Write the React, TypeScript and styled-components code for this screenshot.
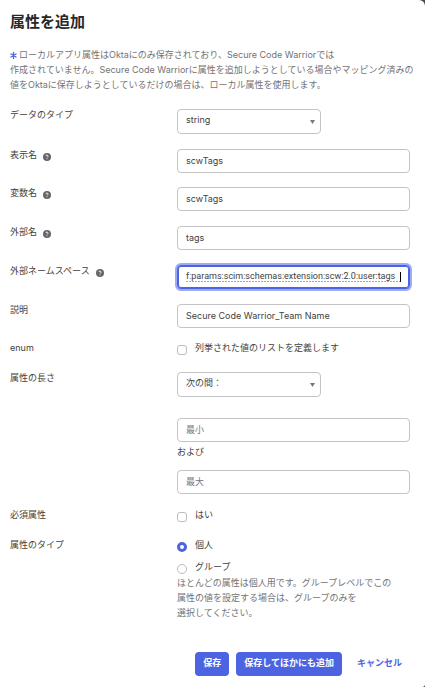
import React, { useId } from "react";
import styled, { createGlobalStyle, css } from "styled-components";

const GlobalStyle = createGlobalStyle`
  *, *::before, *::after { box-sizing: border-box; }
  body {
    margin: 0;
    background: #4a4a4a;
    color: #3f3f41;
    font: 9px/12px Inter, "Noto Sans CJK JP", sans-serif;
  }
  input, select, button { font: inherit; color: inherit; margin: 0; }
`;

const Dialog = styled.form`
  min-height: 100vh;
  padding: 11px 15px 11px 10px;
  background: #fff;
  border-radius: 0 6px 3px 0;
`;

const Title = styled.h1`
  margin: 0;
  font-size: 15px;
  line-height: 22px;
  font-weight: 700;
  color: #272727;
`;

const Intro = styled.p`
  margin: 14px 0 0;
  line-height: 15px;
  color: #737375;
  white-space: nowrap;
`;

const Star = styled.svg`
  width: 7px;
  height: 7px;
  margin-right: 2px;
  vertical-align: -1px;
`;

const Row = styled.div<{ $gap?: number }>`
  display: grid;
  grid-template-columns: 167px minmax(0, 1fr);
  align-items: start;
  margin-top: ${(p) => p.$gap ?? 15}px;
`;

const LabelCell = styled.div`
  display: flex;
  align-items: flex-start;
  gap: 6px;
`;

const Help = styled.button`
  display: flex;
  margin-top: 4px;
  padding: 0;
  border: 0;
  background: none;
  border-radius: 50%;
`;

const control = css`
  display: block;
  width: 100%;
  height: 24px;
  padding: 0 8px 2px;
  border: 1px solid #c4c4c6;
  border-radius: 4px;
  background: #fff;
  outline: none;
`;

const TextInput = styled.input`
  ${control}
  &::placeholder { color: #75757c; opacity: 1; }
`;

const FocusedInput = styled(TextInput)`
  border-color: #4c64e1;
  box-shadow: 0 0 0 2px #9eabf7, inset 0 0 0 1px #4c64e1;
  font-family: Roboto, sans-serif;
  background: repeating-linear-gradient(90deg, #ec8a96 0 2px, #fff 2px 3px) 0 15px / 100% 1px no-repeat content-box #fff;
`;

const CaretBox = styled.div`
  position: relative;
`;

const Caret = styled.span`
  position: absolute;
  top: 7px;
  right: 9px;
  width: 1px;
  height: 10px;
  background: #000;
`;

const SelectBox = styled.div`
  display: grid;
  width: 144px;
  align-items: center;
`;

const Select = styled.select`
  ${control}
  grid-area: 1 / 1;
  height: 25px;
  padding-bottom: 3px;
  appearance: none;
`;

const Arrow = styled.svg`
  grid-area: 1 / 1;
  justify-self: end;
  width: 5px;
  height: 4px;
  margin-right: 6px;
  pointer-events: none;
`;

const Option = styled.label<{ $gap?: number }>`
  display: flex;
  gap: 8px;
  height: 14px;
  margin-top: ${(p) => p.$gap ?? 0}px;
`;

const Tick = styled.input`
  appearance: none;
  width: 10px;
  height: 10px;
  margin-top: 3px;
  border: 1px solid #bcbcc0;
  border-radius: ${(p) => (p.type === "radio" ? "50%" : "3px")};
  background: #fff;
  &:checked { border: 3px solid #4c64e1; }
`;

const Between = styled.p`
  margin: 4px 0 12px;
`;

const Hint = styled.p`
  margin: 0;
  line-height: 15px;
  color: #737375;
`;

const Footer = styled.footer`
  display: flex;
  justify-content: flex-end;
  gap: 7px;
  margin-top: 32px;
`;

const Button = styled.button<{ $plain?: boolean }>`
  height: 24px;
  padding: 0 8px 2px;
  border: 0;
  border-radius: 4px;
  font-weight: 700;
  white-space: nowrap;
  color: ${(p) => (p.$plain ? "#4c64e1" : "#fff")};
  background: ${(p) => (p.$plain ? "none" : "#4c64e1")};
`;

function HelpIcon({ name }: { name: string }) {
  return (
    <Help type="button" aria-label={`${name}のヘルプ`}>
      <svg width="8" height="8" viewBox="0 0 16 16" aria-hidden="true">
        <circle cx="8" cy="8" r="8" fill="#66666a" />
        <path d="M6 6a2 2 0 1 1 2.9 1.9c-.6.3-.9.6-.9 1.3" fill="none" stroke="#fff" strokeWidth="1.7" />
        <circle cx="8" cy="11.7" r="1" fill="#fff" />
      </svg>
    </Help>
  );
}

interface FieldProps {
  label: string;
  value?: string;
  help?: boolean;
  focused?: boolean;
  gap?: number;
}

function TextField({ label, value, help, focused, gap }: FieldProps) {
  const id = useId();
  return (
    <Row $gap={gap}>
      <LabelCell>
        <label htmlFor={id}>{label}</label>
        {help && <HelpIcon name={label} />}
      </LabelCell>
      {focused ? (
        <CaretBox>
          <FocusedInput id={id} defaultValue={value} spellCheck={false} />
          <Caret />
        </CaretBox>
      ) : (
        <TextInput id={id} defaultValue={value} spellCheck={false} />
      )}
    </Row>
  );
}

function SelectField({ label, value, gap }: FieldProps) {
  const id = useId();
  return (
    <Row $gap={gap}>
      <label htmlFor={id}>{label}</label>
      <SelectBox>
        <Select id={id} defaultValue={value}>
          <option>{value}</option>
        </Select>
        <Arrow viewBox="0 0 5 4" aria-hidden="true">
          <path d="M0 0h5L2.5 4z" fill="#77777d" />
        </Arrow>
      </SelectBox>
    </Row>
  );
}

export default function App() {
  return (
    <>
      <GlobalStyle />
      <Dialog lang="ja" onSubmit={(e) => e.preventDefault()}>
        <Title>属性を追加</Title>
        <Intro>
          <Star viewBox="0 0 14 14" aria-hidden="true">
            <path d="M7 0v14M1 3.5l12 7M13 3.5l-12 7" stroke="#4c64e1" strokeWidth="2.6" />
          </Star>
          ローカルアプリ属性はOktaにのみ保存されており、Secure Code Warriorでは
          <br />
          作成されていません。Secure Code Warriorに属性を追加しようとしている場合やマッピング済みの
          <br />
          値をOktaに保存しようとしているだけの場合は、ローカル属性を使用します。
        </Intro>

        <SelectField label="データのタイプ" value="string" gap={17} />
        <TextField label="表示名" value="scwTags" help />
        <TextField label="変数名" value="scwTags" help gap={14} />
        <TextField label="外部名" value="tags" help />
        <TextField
          label="外部ネームスペース"
          value="f:params:scim:schemas:extension:scw:2.0:user:tags"
          help
          focused
        />
        <TextField label="説明" value="Secure Code Warrior_Team Name" />

        <Row $gap={14}>
          <span>enum</span>
          <Option>
            <Tick type="checkbox" />
            列挙された値のリストを定義します
          </Option>
        </Row>
        <SelectField label="属性の長さ" value="次の間：" gap={16} />
        <Row $gap={21}>
          <span />
          <div>
            <TextInput placeholder="最小" aria-label="最小" />
            <Between>および</Between>
            <TextInput placeholder="最大" aria-label="最大" />
          </div>
        </Row>
        <Row>
          <span>必須属性</span>
          <Option>
            <Tick type="checkbox" />
            はい
          </Option>
        </Row>
        <Row $gap={16}>
          <span>属性のタイプ</span>
          <div>
            <Option>
              <Tick type="radio" name="scope" defaultChecked />
              個人
            </Option>
            <Option $gap={8}>
              <Tick type="radio" name="scope" />
              グループ
            </Option>
            <Hint>
              ほとんどの属性は個人用です。グループレベルでこの
              <br />
              属性の値を設定する場合は、グループのみを
              <br />
              選択してください。
            </Hint>
          </div>
        </Row>

        <Footer>
          <Button type="submit">保存</Button>
          <Button type="button">保存してほかにも追加</Button>
          <Button type="button" $plain>
            キャンセル
          </Button>
        </Footer>
      </Dialog>
    </>
  );
}
